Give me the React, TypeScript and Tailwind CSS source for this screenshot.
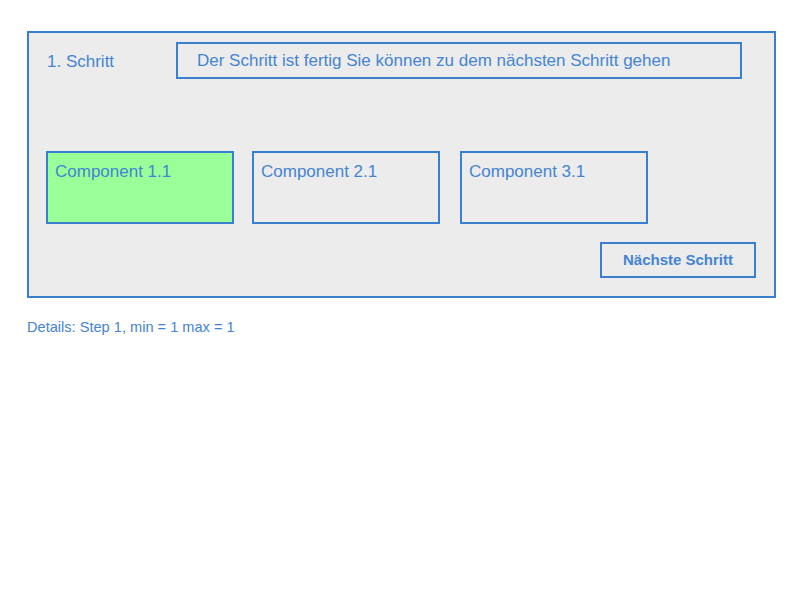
import React from 'react';

const components = ['Component 1.1', 'Component 2.1', 'Component 3.1'];

export default function App() {
  const active = 0;
  return (
    <div className="min-h-screen bg-white text-[#4584d3]" style={{ fontFamily: '"Liberation Sans", Arial, sans-serif' }}>
      <div className="pt-[31px] pl-[27px]">
        {/* Step panel */}
        <div className="w-[749px] border-2 border-[#3b7fd0] bg-[#ececec] pl-[17px] pr-[18px] pt-[9px] pb-[18px]">
          <div className="flex items-center">
            <span className="w-[130px] pl-[1px] pt-[2px] text-[17px]">1. Schritt</span>
            <div className="w-[566px] h-[37px] border-2 border-[#3b7fd0] flex items-center pl-[19px] text-[17px]">
              Der Schritt ist fertig Sie können zu dem nächsten Schritt gehen
            </div>
          </div>

          <div className="flex mt-[72px]">
            {components.map((c, i) => (
              <div
                key={c}
                className={`w-[188px] h-[73px] border-2 border-[#3b7fd0] pl-[7px] pt-[9px] text-[17px] leading-[20px] ${
                  i === active ? 'bg-[#99ff99]' : ''
                } ${i === 1 ? 'ml-[18px]' : i === 2 ? 'ml-[20px]' : ''}`}
              >
                {c}
              </div>
            ))}
          </div>

          <div className="flex justify-end mt-[18px]">
            <button className="w-[156px] h-[36px] border-2 border-[#3b7fd0] pt-[1px] text-[15px] font-bold text-[#4584d3]">
              Nächste Schritt
            </button>
          </div>
        </div>

        <div className="mt-[21px] text-[14.6px] leading-[16px]">Details: Step 1, min = 1 max = 1</div>
      </div>
    </div>
  );
}
